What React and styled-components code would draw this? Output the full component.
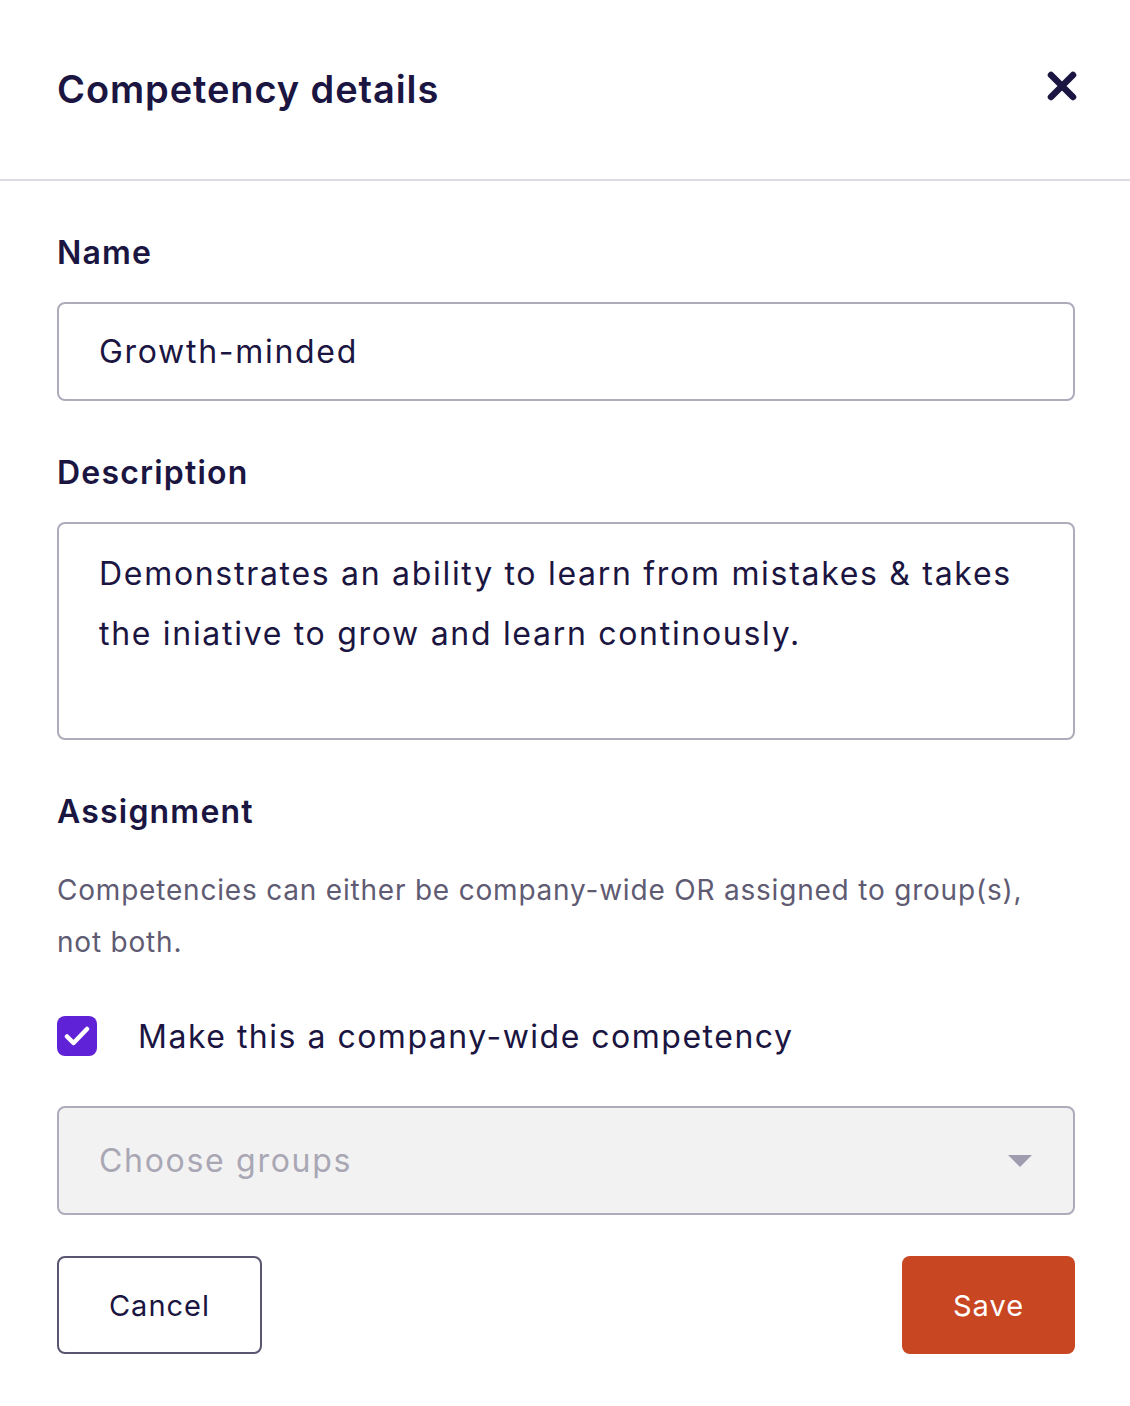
import React from "react";
import styled, { createGlobalStyle } from "styled-components";

const GlobalStyle = createGlobalStyle`
  body {
    margin: 0;
    background: #ffffff;
    font-family: "Inter", "Noto Sans", sans-serif;
    color: #1b1541;
  }
`;

const Panel = styled.div`
  width: 1130px;
  min-height: 1406px;
  background: #fff;
`;

const Header = styled.div`
  height: 181px;
  box-sizing: border-box;
  border-bottom: 2px solid #dcdce0;
  display: flex;
  align-items: center;
  justify-content: space-between;
  padding: 0 52px 2px 57px;
`;

const Title = styled.h2`
  margin: 0;
  font-size: 38px;
  font-weight: 600;
  letter-spacing: 0.9px;
  color: #1b1541;
`;

const CloseButton = styled.button`
  border: none;
  background: none;
  padding: 0;
  width: 32px;
  height: 32px;
  display: flex;
  align-items: center;
  justify-content: center;
  cursor: pointer;
  margin-bottom: 6px;
`;

const Body = styled.div`
  padding: 50px 55px 0 57px;
  display: flex;
  flex-direction: column;
`;

const Label = styled.div`
  font-size: 32px;
  font-weight: 600;
  line-height: 44px;
  letter-spacing: 1.2px;
  color: #1b1541;
  margin-bottom: ${(p) => p.gap || 27}px;
`;

const Field = styled.div`
  box-sizing: border-box;
  width: 1018px;
  border: 2px solid #aeacbb;
  border-radius: 8px;
  padding: ${(p) => (p.multiline ? "20px 40px" : "0 40px")};
  height: ${(p) => p.height}px;
  display: flex;
  align-items: ${(p) => (p.multiline ? "flex-start" : "center")};
  justify-content: space-between;
  font-size: 32px;
  line-height: 60px;
  letter-spacing: 1.7px;
  color: ${(p) => (p.disabled ? "#a9a7b3" : "#1b1541")};
  background: ${(p) => (p.disabled ? "#f2f2f3" : "#fff")};
  margin-bottom: ${(p) => p.after || 0}px;
`;

const Helper = styled.p`
  margin: 0 0 48px;
  font-size: 28px;
  line-height: 52px;
  color: #5f5b73;
  letter-spacing: 0.8px;
`;

const CheckRow = styled.label`
  display: flex;
  align-items: center;
  gap: 41px;
  font-size: 32px;
  letter-spacing: 1.5px;
  color: #1b1541;
  margin-bottom: 50px;
`;

const Box = styled.span`
  width: 40px;
  height: 40px;
  border-radius: 8px;
  background: #6022d6;
  display: flex;
  align-items: center;
  justify-content: center;
  flex-shrink: 0;
`;

const Footer = styled.div`
  width: 1018px;
  display: flex;
  justify-content: space-between;
  margin-top: 41px;
`;

const Button = styled.button`
  height: 98px;
  width: ${(p) => p.width}px;
  box-sizing: border-box;
  border-radius: 8px;
  font-family: inherit;
  font-size: 29px;
  letter-spacing: 1px;
  cursor: pointer;
  border: ${(p) => (p.primary ? "none" : "2px solid #5a5570")};
  background: ${(p) => (p.primary ? "#c94622" : "#fff")};
  color: ${(p) => (p.primary ? "#fff" : "#1b1541")};
`;

export default function App() {
  return (
    <Panel>
      <GlobalStyle />
      <Header>
        <Title>Competency details</Title>
        <CloseButton aria-label="Close">
          <svg width="30" height="30" viewBox="0 0 30 30">
            <path
              d="M4 4 L26 26 M26 4 L4 26"
              stroke="#1b1541"
              strokeWidth="6.5"
              strokeLinecap="round"
            />
          </svg>
        </CloseButton>
      </Header>
      <Body>
        <Label>Name</Label>
        <Field height={99} after={50}>Growth-minded</Field>
        <Label>Description</Label>
        <Field multiline height={218} after={50}>
          Demonstrates an ability to learn from mistakes &amp; takes the iniative to grow and learn continously.
        </Field>
        <Label gap={30}>Assignment</Label>
        <Helper>
          Competencies can either be company-wide OR assigned to group(s), not both.
        </Helper>
        <CheckRow>
          <Box>
            <svg width="26" height="22" viewBox="0 0 26 22">
              <path
                d="M3 11.5 L9.5 18 L23 4"
                fill="none"
                stroke="#fff"
                strokeWidth="4.5"
                strokeLinecap="round"
                strokeLinejoin="round"
              />
            </svg>
          </Box>
          Make this a company-wide competency
        </CheckRow>
        <Field disabled height={109}>
          Choose groups
          <svg width="26" height="14" viewBox="0 0 26 14">
            <path d="M1 1 H25 L13 13 Z" fill="#9f9cb0" />
          </svg>
        </Field>
        <Footer>
          <Button width={205}>Cancel</Button>
          <Button primary width={173}>Save</Button>
        </Footer>
      </Body>
    </Panel>
  );
}
